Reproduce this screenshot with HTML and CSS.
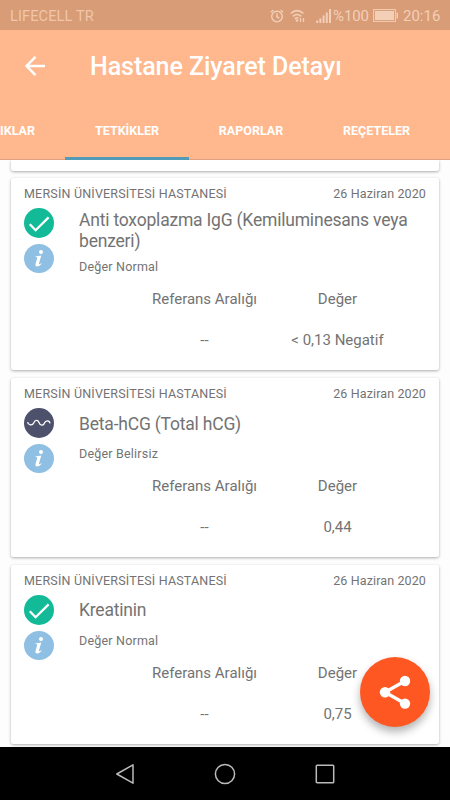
FILE: index.html
```html
<!DOCTYPE html>
<html lang="tr">
<head>
<meta charset="utf-8">
<title>Hastane Ziyaret Detayı</title>
<link rel="stylesheet" href="styles.css">
</head>
<body>
<svg class="defs" width="0" height="0" aria-hidden="true">
  <symbol id="check" viewBox="0 0 30 30"><circle cx="15" cy="15" r="15" fill="#12ba98"/><path d="M5.8 16.2L11.6 22.2L24.6 9.4" fill="none" stroke="#fff" stroke-width="2.3"/></symbol>
  <symbol id="wave" viewBox="0 0 30 30"><circle cx="15" cy="15" r="15" fill="#4d516c"/><path d="M3.6 14.2C4 17.2 8.5 18 9.7 15C11 11.6 14 11.8 15 14.5C16.2 18 19.5 18 20.5 15C21.5 12 25.5 12 26 15.3" fill="none" stroke="#fff" stroke-width="1.3"/></symbol>
  <symbol id="info" viewBox="0 0 30 29"><ellipse cx="15" cy="14.5" rx="15" ry="14.5" fill="#8fbfe3"/><circle cx="17" cy="7.9" r="2" fill="#fff"/><path d="M11.4 12.4L17.3 11.5L14.9 19.8Q14.5 21.1 17.2 19.3L17.5 19.9Q14.8 22.6 12.7 22.4Q10.9 22.1 11.5 19.9L13.2 14.1Q13.5 13 11.4 13.1Z" fill="#fff"/></symbol>
</svg>
<div class="screen">
  <div class="status">
    <span class="carrier">LIFECELL TR</span>
    <svg class="alarm" width="14" height="14" viewBox="0 0 14 14"><g fill="none" stroke="currentColor" stroke-width="1.4"><circle cx="7" cy="7.6" r="5.3"/><path d="M7 4.5V8L9.3 9M.8 3.2L3.4 1M13.2 3.2L10.6 1"/></g></svg>
    <svg class="wifi" width="16" height="14" viewBox="0 0 16 14"><g fill="none" stroke="currentColor" stroke-width="1.5"><path d="M.7 4.5Q7 -1.3 13.5 4.5M2.8 7.4Q7 3.6 11.3 7.4M4.8 10Q7 8 8.5 9.3"/></g><circle cx="7" cy="11.5" r="1.3" fill="currentColor"/><path d="M10.5 9V13M13.5 9V13" stroke="currentColor" stroke-width="1.3"/></svg>
    <svg class="signal" width="16" height="14" viewBox="0 0 16 14"><path d="M1.2 14V11.5M4.4 14V9.5M7.6 14V6.5M10.8 14V3.5M14 14V0" stroke="currentColor" stroke-width="2"/></svg>
    <span class="percent">%100</span>
    <svg class="battery" width="26" height="13" viewBox="0 0 26 13"><rect x=".6" y=".6" width="21.8" height="11.8" fill="none" stroke="currentColor"/><path d="M2 2H21V11H2ZM23.5 3.5H25V9.5H23.5Z" fill="currentColor"/></svg>
    <span class="clock">20:16</span>
  </div>
  <header class="header">
    <div class="toolbar">
      <svg class="back" width="20" height="20" viewBox="0 0 20 20"><path d="M20 10H2M10.5 .8L1.5 10L10.5 19.2" fill="none" stroke="#fff" stroke-width="2.4"/></svg>
      <h1>Hastane Ziyaret Detayı</h1>
    </div>
    <nav class="tabs">
      <span class="tab tab-cut">IKLAR</span><span class="tab active">TETKİKLER</span><span class="tab">RAPORLAR</span><span class="tab">REÇETELER</span>
    </nav>
  </header>
  <main class="list">
    <article class="card previous"></article>
    <article class="card">
      <div class="meta"><span class="hospital">MERSİN ÜNİVERSİTESİ HASTANESİ</span><span class="date">26 Haziran 2020</span></div>
      <div class="body">
        <div class="icons"><svg width="30" height="30"><use href="#check"/></svg><svg width="30" height="29"><use href="#info"/></svg></div>
        <div class="detail"><h2><span>Anti toxoplazma IgG (Kemiluminesans veya benzeri)</span></h2><p>Değer Normal</p></div>
      </div>
      <div class="values"><span>Referans Aralığı</span><span>Değer</span><span>--</span><span>&lt; 0,13 Negatif</span></div>
    </article>
    <article class="card">
      <div class="meta"><span class="hospital">MERSİN ÜNİVERSİTESİ HASTANESİ</span><span class="date">26 Haziran 2020</span></div>
      <div class="body">
        <div class="icons"><svg width="30" height="30"><use href="#wave"/></svg><svg width="30" height="29"><use href="#info"/></svg></div>
        <div class="detail"><h2><span>Beta-hCG (Total hCG)</span></h2><p>Değer Belirsiz</p></div>
      </div>
      <div class="values"><span>Referans Aralığı</span><span>Değer</span><span>--</span><span>0,44</span></div>
    </article>
    <article class="card">
      <div class="meta"><span class="hospital">MERSİN ÜNİVERSİTESİ HASTANESİ</span><span class="date">26 Haziran 2020</span></div>
      <div class="body">
        <div class="icons"><svg width="30" height="30"><use href="#check"/></svg><svg width="30" height="29"><use href="#info"/></svg></div>
        <div class="detail"><h2><span>Kreatinin</span></h2><p>Değer Normal</p></div>
      </div>
      <div class="values"><span>Referans Aralığı</span><span>Değer</span><span>--</span><span>0,75</span></div>
    </article>
  </main>
  <div class="fab"><svg width="70" height="70" viewBox="0 0 70 70"><path d="M45 24L25 35.2L45 46.6" fill="none" stroke="#fff" stroke-width="3.4"/><g fill="#fff"><circle cx="45" cy="24" r="5.2"/><circle cx="25" cy="35.2" r="5.2"/><circle cx="45" cy="46.6" r="5.2"/></g></svg></div>
  <footer class="navbar">
    <svg width="20" height="22" viewBox="0 0 20 22"><path d="M18 1.8V20.2L1.8 11Z" fill="none" stroke="#bbb" stroke-width="1.5" stroke-linejoin="round"/></svg>
    <svg width="22" height="22" viewBox="0 0 22 22"><circle cx="11" cy="11" r="9.6" fill="none" stroke="#bbb" stroke-width="1.5"/></svg>
    <svg width="20" height="20" viewBox="0 0 20 20"><rect x="1.3" y="1.3" width="17.4" height="17.4" rx=".8" fill="none" stroke="#bbb" stroke-width="1.5"/></svg>
  </footer>
</div>
</body>
</html>
```
FILE: styles.css
```css
* { box-sizing: border-box; }
body { margin: 0; font-family: Roboto, "Liberation Sans", sans-serif; color: #737373; }
h1, h2, p { margin: 0; font-weight: 400; }
svg { display: block; flex: none; }
.defs { position: absolute; }
.screen { position: relative; width: 450px; height: 800px; overflow: hidden; display: flex; flex-direction: column; background: #fdfdfd; }
.status { height: 30px; flex: none; display: flex; align-items: center; padding: 1px 10px 0; background: #d89c77; color: #f3cfb8; font-size: 15px; white-space: nowrap; }
.carrier { flex: 1; font-size: 14.6px; letter-spacing: .1px; color: #f1c6aa; }
.wifi { margin-left: 6px; }
.signal { margin-left: 10px; }
.percent { margin-left: 1px; width: 36px; letter-spacing: -.1px; }
.battery { margin-left: 4px; }
.clock { margin-left: 4px; width: 37px; }
.header { height: 130px; flex: none; background: #ffb78d; color: #fff; box-shadow: inset 0 -2px 1px -1px #dda180; }
.toolbar { height: 70px; display: flex; align-items: center; padding: 2px 0 0 25px; }
h1 { margin-left: 45px; font-size: 25px; font-weight: 500; letter-spacing: -.06px; white-space: nowrap; }
.tabs { height: 60px; display: grid; grid-template-columns: 124px 124px 124px 127px; margin-left: -59px; width: 499px; }
.tab { display: flex; align-items: center; justify-content: center; font-size: 12.5px; font-weight: 700; border-bottom: 3px solid transparent; padding-top: 3px; }
.tab-cut { justify-content: flex-end; padding-right: 30px; }
.active { border-bottom-color: #529bb6; }
.list { flex: 1; min-height: 0; overflow: hidden; padding: 0 11px; display: flex; flex-direction: column; gap: 7.5px; }
.card { flex: none; background: #fff; border-radius: 2.5px; padding: 0 13px 17.25px; box-shadow: 0 1px 3px rgba(0, 0, 0, .32); }
.previous { height: 10.5px; padding: 0; border-radius: 0 0 2.5px 2.5px; }
.meta { height: 30px; display: flex; align-items: center; justify-content: space-between; padding-top: 1px; font-size: 12.5px; }
.hospital { letter-spacing: .19px; }
.date { letter-spacing: .12px; }
.body { display: flex; gap: 25px; }
.icons { width: 30px; height: 65px; margin-bottom: -65px; display: flex; flex-direction: column; gap: 6px; }
.detail { flex: 1; }
h2 { min-height: 30px; padding-top: 2px; display: flex; align-items: center; font-size: 17.5px; line-height: 20.5px; letter-spacing: -.2px; }
p { height: 31px; font-size: 12.5px; line-height: 31px; letter-spacing: .2px; }
.values { display: grid; grid-template-columns: 133px 133px; grid-template-rows: 26px 41px; margin: 4px 0 0 114px; text-align: center; font-size: 15px; line-height: 26px; white-space: nowrap; }
.values span:nth-child(n+3) { padding-top: 15px; }
.fab { position: absolute; left: 360px; top: 657px; width: 70px; height: 70px; border-radius: 50%; background: #ff5722; box-shadow: 0 5px 9px rgba(0, 0, 0, .3); }
.navbar { height: 53px; flex: none; display: flex; align-items: center; justify-content: center; gap: 79px; background: #000; }
```
